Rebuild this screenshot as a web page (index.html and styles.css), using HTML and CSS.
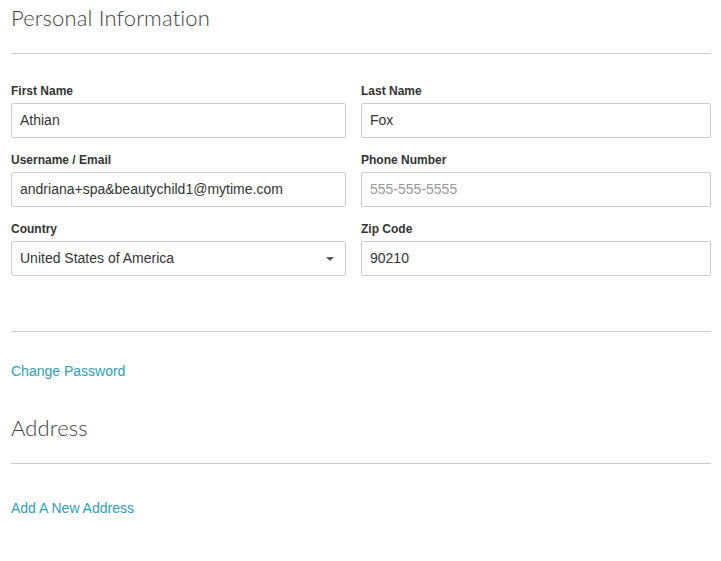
FILE: index.html
```html
<!DOCTYPE html>
<html>
<head>
<meta charset="utf-8">
<link rel="stylesheet" href="styles.css">
</head>
<body>
<div class="page">
  <h2 class="section-title">Personal Information</h2>
  <hr class="rule">
  <div class="form-grid">
    <div class="field">
      <label class="label">First Name</label>
      <div class="input">Athian</div>
    </div>
    <div class="field">
      <label class="label">Last Name</label>
      <div class="input">Fox</div>
    </div>
    <div class="field">
      <label class="label">Username / Email</label>
      <div class="input">andriana+spa&amp;beautychild1@mytime.com</div>
    </div>
    <div class="field">
      <label class="label">Phone Number</label>
      <div class="input placeholder">555-555-5555</div>
    </div>
    <div class="field">
      <label class="label">Country</label>
      <div class="input select">United States of America<span class="caret"></span></div>
    </div>
    <div class="field">
      <label class="label">Zip Code</label>
      <div class="input">90210</div>
    </div>
  </div>
  <hr class="rule rule-mid">
  <a class="link link-pw" href="#">Change Password</a>
  <h2 class="section-title address-title">Address</h2>
  <hr class="rule">
  <a class="link link-addr" href="#">Add A New Address</a>
</div>
</body>
</html>
```
FILE: styles.css
```css
html, body {
  margin: 0;
  padding: 0;
  background: #fff;
}
.page {
  width: 700px;
  padding-left: 11px;
  font-family: "Liberation Sans", Arial, sans-serif;
}
.section-title {
  font-family: Lato, sans-serif;
  font-weight: 300;
  font-size: 22px;
  line-height: 26px;
  letter-spacing: 0.15px;
  color: #3f3f3f;
  margin: 0;
  padding-top: 5px;
}
.rule {
  border: 0;
  border-top: 1px solid #ccc;
  margin: 22px 0 0 0;
  height: 0;
}
.form-grid {
  display: grid;
  grid-template-columns: 335px 350px;
  column-gap: 15px;
  row-gap: 15px;
  margin-top: 30px;
}
.field {
  display: flex;
  flex-direction: column;
}
.label {
  font-weight: 700;
  font-size: 12px;
  line-height: 14px;
  color: #333;
  margin-bottom: 5px;
}
.input {
  box-sizing: border-box;
  height: 35px;
  border: 1px solid #ccc;
  border-radius: 2px;
  padding: 0 8px;
  font-size: 14px;
  line-height: 33px;
  color: #333;
  display: flex;
  align-items: center;
}
.placeholder {
  color: #999;
}
.select {
  justify-content: space-between;
}
.caret {
  width: 0;
  height: 0;
  border-left: 4px solid transparent;
  border-right: 4px solid transparent;
  border-top: 4px solid #555;
  margin-right: 3px;
}
.rule-mid {
  margin-top: 55px;
}
.link {
  display: block;
  font-size: 14px;
  line-height: 16px;
  color: #2b9fc0;
  text-decoration: none;
}
.link-pw {
  margin-top: 31px;
}
.address-title {
  margin-top: 36px;
  padding-top: 0;
}
.link-addr {
  margin-top: 36px;
}
```
